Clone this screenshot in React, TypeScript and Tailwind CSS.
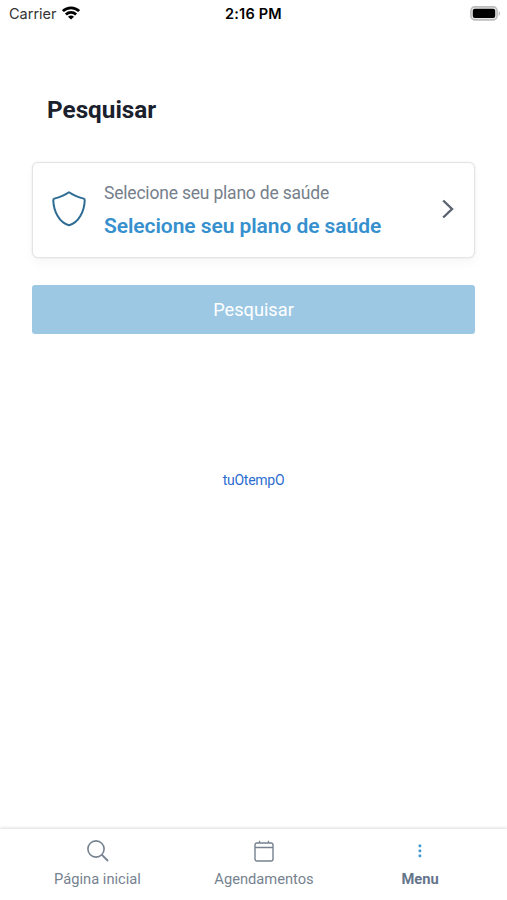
import type { ReactNode } from "react";

function StatusBar() {
  return (
    <div className="flex h-7 items-center justify-between pl-[9px] pr-1.5 font-[Inter,sans-serif] leading-7">
      <div className="flex w-40 items-center gap-[5px] text-[14.5px] text-[#333]">
        <span>Carrier</span>
        <svg width="18" height="14" viewBox="0 0 18 14" fill="none" stroke="#000" strokeWidth="2.8" className="-mt-0.5">
          <path d="M0.9 5.1C5.5 0.7 12.5 0.7 17.1 5.1" />
          <path d="M3.9 8.5C6.8 5.7 11.2 5.7 14.1 8.5" />
          <path d="M9 13.6L6 10.7C7.7 9.2 10.3 9.2 12 10.7Z" fill="#000" stroke="none" />
        </svg>
      </div>
      <span className="-ml-[3px] text-[14.5px] font-semibold tracking-[0.2px] text-black">2:16 PM</span>
      <div className="flex w-40 justify-end">
        <svg width="31" height="15" viewBox="0 0 31 15" className="-mt-px">
          <rect x="0.9" y="0.9" width="26.2" height="13" rx="3.8" fill="#e8e8e8" stroke="#bdbdbd" strokeWidth="1.6" />
          <rect x="2.8" y="2.8" width="22.4" height="9.2" rx="2" fill="#000" />
          <path d="M28.6 5.2C30.6 5.8 30.6 9.2 28.6 9.8Z" fill="#bdbdbd" />
        </svg>
      </div>
    </div>
  );
}

function NavItem({ label, className, children }: { label: string; className: string; children: ReactNode }) {
  return (
    <a href="#" className={`flex flex-col items-center text-[14.7px] leading-5 ${className}`}>
      <span className="flex h-6 items-center">{children}</span>
      <span className="mt-1.5">{label}</span>
    </a>
  );
}

export default function App() {
  return (
    <div className="flex h-[900px] w-[507px] flex-col overflow-hidden bg-white font-[Roboto,sans-serif]">
      <StatusBar />

      <main className="flex flex-1 flex-col px-8">
        <h1 className="mt-[66px] pl-[15px] text-[24.3px] leading-8 font-bold text-[#1a202c]">Pesquisar</h1>

        {/* Health plan selector */}
        <button className="mt-9 flex h-[96px] items-center rounded-md border border-[#e4e4e6] bg-white pr-5 pl-[19px] text-left shadow-[0_0_2px_rgba(0,0,0,0.1),0_6px_10px_rgba(0,0,0,0.03)]">
          <svg width="34" height="36" viewBox="0 0 34 36" fill="none" stroke="#2e6c94" strokeWidth="2" strokeLinejoin="round" className="-mt-0.5">
            <path d="M17 1.3C12.5 4.4 7 6.4 2.3 7.6C1.5 7.8 1.3 8.4 1.3 9.2C1.6 20 7 31.5 17 34.3C27 31.5 32.4 20 32.7 9.2C32.7 8.4 32.5 7.8 31.7 7.6C27 6.4 21.5 4.4 17 1.3Z" />
          </svg>
          <span className="ml-[18px] flex flex-1 flex-col">
            <span className="text-[17.5px] leading-7 tracking-[-0.2px] text-[#76808c]">Selecione seu plano de saúde</span>
            <span className="mt-[3px] text-[21px] leading-8 font-semibold tracking-[-0.07px] text-[#3690ce]">Selecione seu plano de saúde</span>
          </span>
          <svg width="12" height="20" viewBox="0 0 12 20" fill="none" stroke="#5b6470" strokeWidth="2.4" className="-mt-0.5">
            <path d="M1.2 1.5L10 10L1.2 18.5" />
          </svg>
        </button>

        <button className="mt-[27px] h-[49px] rounded-[3px] bg-[#9dc8e4] text-[18.2px] text-white">Pesquisar</button>

        <a href="#" className="mt-[136px] self-center text-[14px] leading-5 tracking-[-0.25px] text-[#2b6cd0]">
          tuOtempO
        </a>
      </main>

      <nav className="flex h-[71px] bg-white px-[11px] pt-[10px] text-[#76828f] shadow-[0_-1px_3px_rgba(0,0,0,0.14)]">
        <NavItem label="Página inicial" className="w-[173px]">
          <svg width="22" height="22" viewBox="0 0 22 22" fill="none" stroke="currentColor" strokeWidth="1.6">
            <circle cx="9" cy="9" r="8.1" />
            <path d="M14.7 14.7L21 21" strokeWidth="1.9" />
          </svg>
        </NavItem>
        <NavItem label="Agendamentos" className="w-[160px]">
          <svg width="20" height="22" viewBox="0 0 20 22" fill="none" stroke="currentColor" strokeWidth="1.4">
            <rect x="1" y="3" width="18" height="18" rx="2" />
            <path d="M1 7.5H19M5.5 0.8V3M14.5 0.8V3" />
          </svg>
        </NavItem>
        <NavItem label="Menu" className="w-[152px] font-bold text-[#64748b]">
          <svg width="4" height="14" viewBox="0 0 4 14" fill="#4299d1">
            <rect x="0.6" y="0.6" width="2.6" height="2.6" rx="0.6" />
            <rect x="0.6" y="5.6" width="2.6" height="2.6" rx="0.6" />
            <rect x="0.6" y="10.6" width="2.6" height="2.6" rx="0.6" />
          </svg>
        </NavItem>
      </nav>
    </div>
  );
}
